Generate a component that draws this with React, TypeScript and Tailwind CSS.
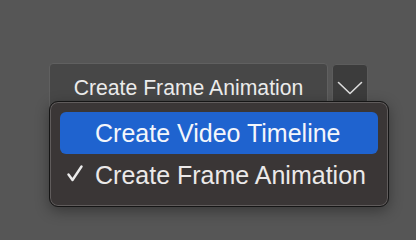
import React from 'react';

const menuItems = [
    { label: 'Create Video Timeline', active: true, checked: false },
    { label: 'Create Frame Animation', active: false, checked: true },
];

function Chevron() {
    return (
        <svg width="26" height="14" viewBox="0 0 26 14" fill="none">
            <path d="M1.5 1.5 L13 12.5 L24.5 1.5" stroke="#dcdcdc" strokeWidth="1.6" strokeLinecap="round" strokeLinejoin="round" />
        </svg>
    );
}

function Check() {
    return (
        <svg width="16" height="17" viewBox="0 0 16 17" fill="none">
            <path d="M1.5 9.5 L5.5 15 L14.5 1.5" stroke="#ebebeb" strokeWidth="2.4" strokeLinecap="round" strokeLinejoin="round" />
        </svg>
    );
}

export default function App() {
    return (
        <div className="relative w-[416px] h-[240px] overflow-hidden bg-[#565656] font-['Liberation_Sans',Arial,sans-serif]">
            <div className="flex items-start gap-[4px] pl-[49px] pt-[63px]">
                <button className="flex items-start justify-center w-[279px] h-[48px] pt-[12px] rounded-[4px] border border-[#606060] bg-[#474747] text-[21.2px] leading-[24px] text-[#ececec]">
                    Create Frame Animation
                </button>
                <button className="flex items-start justify-center w-[36px] h-[47px] mt-[1px] pt-[16px] rounded-[4px] border border-[#5c5c5c] bg-[#3c3c3c]">
                    <Chevron />
                </button>
            </div>

            {/* popup menu */}
            <div className="absolute left-[49px] top-[101px] w-[340px] h-[106px] rounded-[9px] border border-[#151515] bg-[#3a3636] shadow-[inset_0_0_0_1px_#605c5c,0_4px_14px_rgba(0,0,0,0.35)] px-[10px] pt-[10px]">
                {menuItems.map((item) => (
                    <div
                        key={item.label}
                        className={
                            'relative flex items-center h-[42px] pl-[35px] rounded-[6px] text-[25px] leading-[28px] ' +
                            (item.active ? 'bg-[#1f63cf] text-[#f4f6fb]' : 'text-[#ebe9e9]')
                        }
                    >
                        {item.checked && (
                            <span className="absolute left-[7px] top-[11px]">
                                <Check />
                            </span>
                        )}
                        {item.label}
                    </div>
                ))}
            </div>
        </div>
    );
}
